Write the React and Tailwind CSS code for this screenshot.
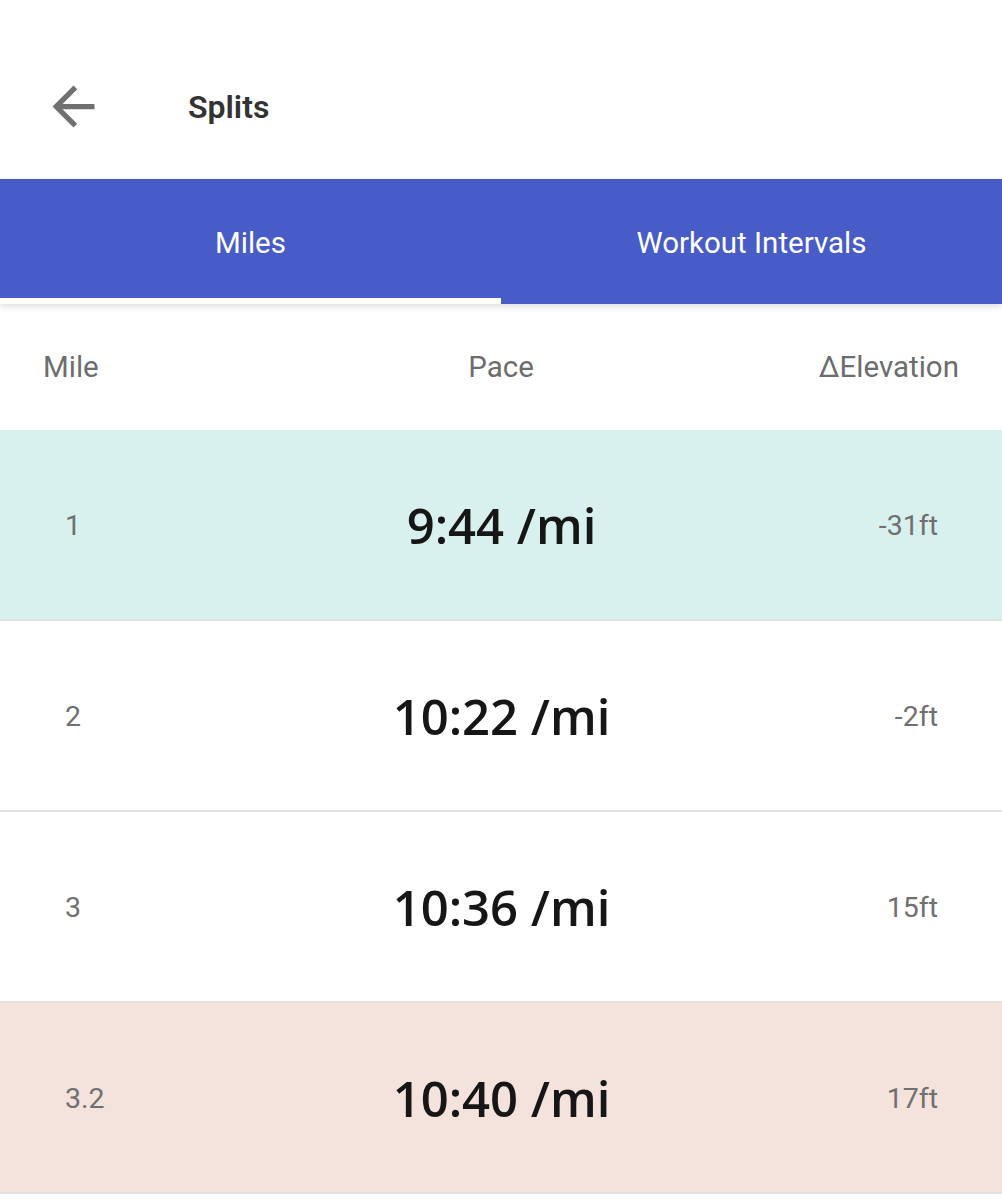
import React from "react";

const rows = [
  { mile: "1", pace: "9:44 /mi", elev: "-31ft", bg: "bg-[#d9f1ee]" },
  { mile: "2", pace: "10:22 /mi", elev: "-2ft", bg: "bg-white" },
  { mile: "3", pace: "10:36 /mi", elev: "15ft", bg: "bg-white" },
  { mile: "3.2", pace: "10:40 /mi", elev: "17ft", bg: "bg-[#f4e2dd]" },
];

export default function App() {
  return (
    <div className="w-[1002px] h-[1200px] bg-white overflow-hidden font-['Roboto','Liberation_Sans',sans-serif]">
      {/* Top bar */}
      <div className="h-[179px] flex items-center pt-[34px]">
        <div className="w-[148px] flex justify-center">
          <svg width="63" height="63" viewBox="0 0 24 24" className="-ml-[2px]">
            <path
              d="M20 11H7.83l5.59-5.59L12 4l-8 8 8 8 1.41-1.41L7.83 13H20v-2z"
              fill="#707070"
            />
          </svg>
        </div>
        <div className="ml-[40px] text-[32px] font-semibold text-[#333333] leading-none">
          Splits
        </div>
      </div>

      {/* Tabs */}
      <div className="relative z-10 h-[125px] bg-[#475cc6] flex shadow-[0_3px_6px_rgba(0,0,0,0.12)]">
        <div className="relative flex-1 flex items-center justify-center text-white text-[29.5px] pt-[4px]">
          Miles
          <div className="absolute left-0 right-0 bottom-0 h-[6px] bg-white" />
        </div>
        <div className="flex-1 flex items-center justify-center text-white text-[29.5px] pt-[4px]">
          Workout Intervals
        </div>
      </div>

      {/* Header row */}
      <div className="h-[126px] flex items-center px-[43px] text-[29.5px] text-[#6d6d6d]">
        <div className="w-[200px]">Mile</div>
        <div className="flex-1 text-center">Pace</div>
        <div className="w-[200px] text-right">ΔElevation</div>
      </div>

      {/* Rows */}
      {rows.map((r) => (
        <div
          key={r.mile}
          className={`h-[191px] flex items-center pl-[65px] pr-[64px] border-b-2 border-[#e0e0e0] ${r.bg}`}
        >
          <div className="w-[200px] text-[28.5px] text-[#707070] pt-[3px]">{r.mile}</div>
          <div className="flex-1 text-center text-[49px] font-semibold text-[#161616] font-['Open_Sans','Noto_Sans',sans-serif] pt-[3px]">
            {r.pace}
          </div>
          <div className="w-[200px] text-right text-[28.5px] text-[#707070] pt-[3px]">{r.elev}</div>
        </div>
      ))}
    </div>
  );
}
